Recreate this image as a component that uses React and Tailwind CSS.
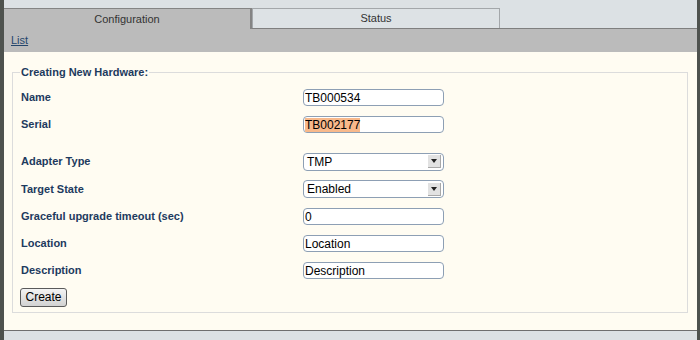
import React from "react";

const font = { fontFamily: '"Liberation Sans", Arial, sans-serif' };

const TextBox = ({ value, selected }) => (
  <div className="flex h-[17px] w-[141px] items-center rounded-[4px] border border-[#8d9fb4] bg-white pl-[1px] text-[12px] leading-none text-black">
    {selected ? <span className="bg-[#f8b98b] py-[1px]">{value}</span> : value}
  </div>
);

const SelectBox = ({ value }) => (
  <div className="flex h-[18px] w-[141px] items-center justify-between rounded-[4px] border border-[#8d9fb4] bg-white pl-[3px] pr-[2px] text-[12px] leading-none text-black">
    <span>{value}</span>
    <span className="flex h-[13px] w-[13px] items-center justify-center border-b border-r border-[#a8a8a8] bg-[#e2e2e2]">
      <svg width="6" height="4" viewBox="0 0 6 4">
        <path d="M0 0 L6 0 L3 4 Z" fill="#222" />
      </svg>
    </span>
  </div>
);

const Row = ({ label, tall, children }) => (
  <div className={tall ? "flex h-[28px] items-center pl-[1px]" : "flex h-[27px] items-center pl-[1px]"}>
    <div className="w-[282px] text-[11px] font-bold text-[#1d3a5e]">{label}</div>
    {children}
  </div>
);

export default function App() {
  return (
    <div className="flex h-[340px] w-[700px] bg-[#4e524e]" style={font}>
      <div className="ml-[4px] mr-[3px] flex flex-1 flex-col bg-[#dce1e4]">
        <div className="flex h-[29px] items-end">
          <div className="flex h-[21px] w-[248px] items-center justify-center border-r-2 border-t border-[#848484] bg-[#bbbbbb] text-[11px] text-[#333]">
            Configuration
          </div>
          <div className="flex h-full flex-1 items-end border-b border-[#7f7f7f]">
            <div className="flex h-[20px] w-[248px] items-center justify-center border-l border-r border-t border-[#a3a7aa] bg-[#dde2e5] text-[11px] text-[#333]">
              Status
            </div>
          </div>
        </div>
        <div className="flex h-[23px] items-center bg-[#bbbbbb] pl-[7px]">
          <a href="#" className="text-[11px] text-[#24456b] underline">
            List
          </a>
        </div>
        <div className="h-[278px] bg-[#fffcf2] pl-[8px] pr-[9px] pt-[13px]">
          <fieldset className="border border-[#dcdcdc] px-[7px] pb-[4px] pt-[5px]">
            <legend className="px-[1px] text-[11px] font-bold leading-[14px] text-[#1d3a5e]">
              Creating New Hardware:
            </legend>
            <Row label="Name">
              <TextBox value="TB000534" />
            </Row>
            <Row label="Serial">
              <TextBox value="TB002177" selected />
            </Row>
            <div className="h-[10px]" />
            <Row label="Adapter Type">
              <SelectBox value="TMP" />
            </Row>
            <Row label="Target State" tall>
              <SelectBox value="Enabled" />
            </Row>
            <Row label="Graceful upgrade timeout (sec)">
              <TextBox value="0" />
            </Row>
            <Row label="Location">
              <TextBox value="Location" />
            </Row>
            <Row label="Description">
              <TextBox value="Description" />
            </Row>
            <button className="mt-[2px] h-[19px] w-[47px] rounded-[3px] border border-[#5a5a5a] bg-gradient-to-b from-[#f4f4f4] to-[#d2d2d2] text-[12px] leading-none text-black">
              Create
            </button>
          </fieldset>
        </div>
        <div className="flex-1 border-t border-[#6f6f6f] bg-[#dce1e4]" />
      </div>
    </div>
  );
}
